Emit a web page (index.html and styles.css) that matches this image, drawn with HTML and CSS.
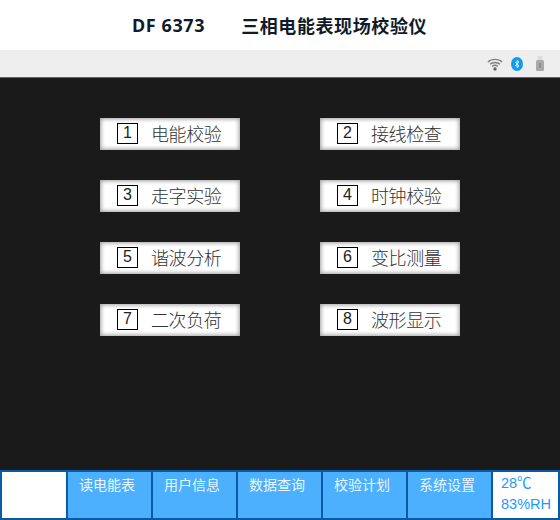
FILE: index.html
```html
<!DOCTYPE html>
<html lang="zh-CN">

<head>
    <meta charset="UTF-8">
    <title>DF 6373</title>
    <link rel="stylesheet" href="styles.css">
</head>

<body>

    <div class="header">
        <span class="model">DF 6373</span>
        <span class="name">三相电能表现场校验仪</span>
    </div>

    <div class="status-bar">
        <svg class="icon" width="16" height="14" viewBox="0 0 16 14">
            <path d="M1 5 C4.5 1.5 11.5 1.5 15 5" fill="none" stroke="#7b8085" stroke-width="1.4"/>
            <path d="M3 7.3 C5.5 4.8 10.5 4.8 13 7.3" fill="none" stroke="#7b8085" stroke-width="1.4"/>
            <path d="M5.2 9.4 C6.8 8 9.2 8 10.8 9.4" fill="none" stroke="#7b8085" stroke-width="1.4"/>
            <circle cx="8" cy="12" r="1.7" fill="#5f6469"/>
        </svg>
        <svg class="icon" width="12" height="14" viewBox="0 0 12 14">
            <ellipse cx="6" cy="7" rx="6" ry="7" fill="#0f9bf2"/>
            <path d="M3.9 5 L8 8.8 L6 10.6 L6 3.4 L8 5.2 L3.9 9" fill="none" stroke="#e6f5ff" stroke-width="1"/>
        </svg>
        <svg class="icon usb" width="8" height="15" viewBox="0 0 8 15">
            <rect x="1.5" y="0" width="5" height="4" fill="#dcdcdc"/>
            <rect x="0" y="4" width="8" height="11" rx="1.5" fill="#a8a8a8"/>
            <path d="M4 7 L4 12" stroke="#8a8a8a" stroke-width="1.6"/>
        </svg>
    </div>

    <div class="main">
        <div class="menu">
            <div class="menu-item"><span class="num">1</span><span class="label">电能校验</span></div>
            <div class="menu-item"><span class="num">2</span><span class="label">接线检查</span></div>
            <div class="menu-item"><span class="num">3</span><span class="label">走字实验</span></div>
            <div class="menu-item"><span class="num">4</span><span class="label">时钟校验</span></div>
            <div class="menu-item"><span class="num">5</span><span class="label">谐波分析</span></div>
            <div class="menu-item"><span class="num">6</span><span class="label">变比测量</span></div>
            <div class="menu-item"><span class="num">7</span><span class="label">二次负荷</span></div>
            <div class="menu-item"><span class="num">8</span><span class="label">波形显示</span></div>
        </div>
    </div>

    <div class="footer">
        <div class="blank"></div>
        <div class="tab">读电能表</div>
        <div class="tab">用户信息</div>
        <div class="tab">数据查询</div>
        <div class="tab">校验计划</div>
        <div class="tab">系统设置</div>
        <div class="climate">28℃<br>83%RH</div>
    </div>

</body>

</html>
```

FILE: styles.css
```css
html, body {
    margin: 0;
    padding: 0;
}

body {
    width: 560px;
    height: 520px;
    display: flex;
    flex-direction: column;
    overflow: hidden;
    font-family: 'Noto Sans', 'Noto Sans CJK SC', sans-serif;
    background-color: #1a1a1a;
}

.header {
    height: 50px;
    flex: none;
    display: flex;
    align-items: center;
    padding-left: 132px;
    background-color: #fff;
    color: #0f1b2a;
    font-size: 18px;
    font-weight: 700;
}

.model {
    letter-spacing: 0.6px;
}

.name {
    margin-left: 36px;
    letter-spacing: 0.6px;
}

.status-bar {
    height: 27px;
    flex: none;
    display: flex;
    align-items: center;
    justify-content: flex-end;
    gap: 8px;
    padding-right: 16px;
    background-color: #eeeeee;
    border-bottom: 1px solid #666;
}

.usb {
    margin-left: 5px;
}

.main {
    flex: 1;
    padding: 40px 100px 0;
}

.menu {
    display: grid;
    grid-template-columns: 140px 140px;
    grid-auto-rows: 32px;
    column-gap: 80px;
    row-gap: 30px;
}

.menu-item {
    display: flex;
    align-items: center;
    padding-left: 17px;
    background-color: #fff;
    box-shadow: inset 0 0 4px 1px #9a9a9a;
    color: #333;
}

.num {
    box-sizing: border-box;
    width: 21px;
    height: 21px;
    margin-bottom: 1px;
    border: 1px solid #000;
    text-align: center;
    font-family: 'Liberation Sans', sans-serif;
    font-size: 16px;
    line-height: 18px;
    color: #222;
}

.label {
    margin-left: 13px;
    margin-bottom: 3px;
    font-family: 'Noto Sans CJK SC', sans-serif;
    font-size: 18px;
    font-weight: 300;
    letter-spacing: -0.4px;
}

.footer {
    height: 50px;
    flex: none;
    box-sizing: border-box;
    display: flex;
    gap: 2px;
    border: 2px solid #0a5aa5;
    background-color: #0a5aa5;
}

.blank {
    width: 64px;
    background-color: #fff;
}

.tab {
    flex: 1;
    padding: 2px 5px 0 0;
    text-align: center;
    background-color: #4cb0ff;
    color: #e8f5ff;
    font-family: 'Noto Sans CJK SC', sans-serif;
    font-size: 14px;
    line-height: 20px;
}

.climate {
    width: 65px;
    padding: 1px 0 0 8px;
    box-sizing: border-box;
    background-color: #fff;
    color: #1a9bff;
    font-family: 'Liberation Sans', sans-serif;
    font-size: 14.5px;
    line-height: 21px;
}
```
